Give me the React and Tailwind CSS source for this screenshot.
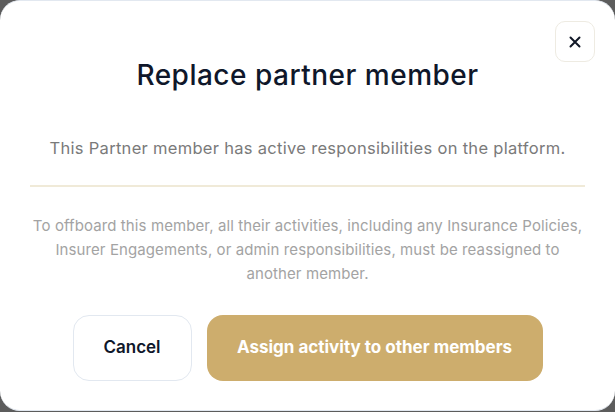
import React from 'react';

const ReplaceMemberModal = () => {
  return (
    <div className="w-[615px] h-[412px] bg-[#5c5c5c] font-['Inter','Liberation_Sans',sans-serif]">
      <div className="relative h-[411px] rounded-[20px] bg-white border-y border-[#e2e8f0] flex flex-col items-center px-[30px]">
        {/* close */}
        <button className="absolute top-[20px] right-[20px] w-[40px] h-[41px] rounded-[10px] border border-[#eeebe2] bg-white flex items-center justify-center text-[#111827]">
          <svg width="12" height="12" viewBox="0 0 12 12" fill="none" stroke="currentColor" strokeWidth="2" strokeLinecap="round">
            <path d="M1.5 1.5l9 9M10.5 1.5l-9 9" />
          </svg>
        </button>

        <h1 className="mt-[56px] text-[28px] leading-[36px] tracking-[0.5px] font-medium text-[#0f172a] text-center">
          Replace partner member
        </h1>

        <p className="mt-[43px] text-[16.5px] leading-[24px] tracking-[0.3px] text-[#7a7a7a] text-center">
          This Partner member has active responsibilities on the platform.
        </p>

        <div className="mt-[25px] w-full h-[2px] bg-[#f0ead8]" />

        <p className="mt-[27px] text-[15px] leading-[24px] tracking-[0.1px] text-[#a3a3a3] text-center">
          To offboard this member, all their activities, including any Insurance Policies,
          <br />
          Insurer Engagements, or admin responsibilities, must be reassigned to
          <br />
          another member.
        </p>

        <div className="mt-[29px] flex gap-[15px]">
          <button className="w-[119px] h-[66px] rounded-[16px] border border-[#e2e8f0] bg-white text-[17px] font-semibold text-[#0f172a]">
            Cancel
          </button>
          <button className="w-[336px] h-[66px] rounded-[16px] bg-[#cdad6d] text-[17px] font-bold text-white">
            Assign activity to other members
          </button>
        </div>
      </div>
    </div>
  );
};

export default function App() {
  return <ReplaceMemberModal />;
}
